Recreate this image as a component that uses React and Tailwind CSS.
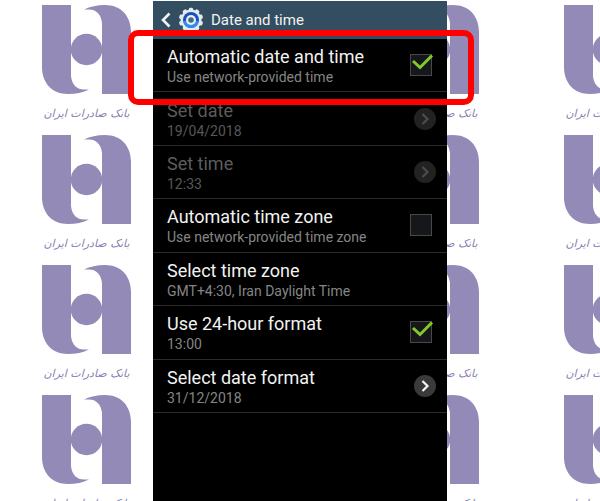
import React, { useState } from "react"
import clsx from "clsx"

function BankLogo() {
	return (
		<svg viewBox="0 0 89 89" className="block h-[89px] w-[89px]" fill="#938ab7">
			<path d="M0 0H29V71C30 80 35 84.500 42 84.500H47C41 87.500 34 89 26 89C10 89 0 78 0 62Z" />
			<path d="M89 89H60V18C59 9 54 4.500 47 4.500H42C48 1.500 55 0 63 0C79 0 89 11 89 27Z" />
			<circle cx="44.500" cy="44.500" r="15.700" />
		</svg>
	)
}

// Repeating bank logo behind the phone
function Watermark() {
	return (
		<div
			aria-hidden="true"
			className="absolute inset-0 flex flex-col overflow-hidden pt-[5px]"
		>
			{[0, 1, 2, 3].map((row) => (
				<div key={row} className="flex shrink-0">
					{[0, 1, 2, 3].map((col) => (
						<div
							key={col}
							className={clsx(
								"h-[130px] w-[174px] shrink-0 pl-[42px]",
								col === 1 && "invisible"
							)}
						>
							<div className="w-[89px]">
								<BankLogo />
								{col !== 1 && (
									<p
										dir="rtl"
										className="mt-[8px] text-center text-[11px] leading-[24px] whitespace-nowrap text-[#8a80b3] italic font-['DejaVu_Sans',sans-serif]"
									>
										بانک صادرات ایران
									</p>
								)}
							</div>
						</div>
					))}
				</div>
			))}
		</div>
	)
}

function GearIcon() {
	const teeth = [0, 36, 72, 108, 144, 180, 216, 252, 288, 324]
	return (
		<svg viewBox="0 0 26 26" className="h-[26px] w-[26px]">
			<g fill="#e4ebf0">
				<circle cx="13" cy="13" r="10.500" />
				{teeth.map((angle) => (
					<rect
						key={angle}
						x="10.800"
						y="0.800"
						width="4.400"
						height="5"
						rx="1.500"
						transform={`rotate(${angle} 13 13)`}
					/>
				))}
			</g>
			<circle cx="13" cy="13" r="8" fill="#1a50bd" />
			<path d="M5.500 14a7.500 7 0 0 0 15 0z" fill="#2f8fee" />
			<circle cx="13" cy="13" r="5" fill="#e9f0f6" />
			<circle cx="13" cy="13" r="2.800" fill="#44688c" />
		</svg>
	)
}

function RowText({ title, summary, disabled }) {
	return (
		<span className="flex flex-col pt-[3px] text-left">
			<span
				className={clsx(
					"text-[18px] leading-[22px]",
					disabled ? "text-[#5c5c5c]" : "text-[#f2f2f2]"
				)}
			>
				{title}
			</span>
			<span
				className={clsx(
					"text-[14px] leading-[19px]",
					disabled ? "text-[#575757]" : "text-[#858585]"
				)}
			>
				{summary}
			</span>
		</span>
	)
}

function CheckRow({ title, summary, defaultChecked = false }) {
	const [checked, setChecked] = useState(defaultChecked)

	return (
		<label className="flex h-full items-center justify-between pr-[15px] pl-[14px]">
			<RowText title={title} summary={summary} />
			<span className="relative">
				<input
					type="checkbox"
					checked={checked}
					onChange={() => setChecked(!checked)}
					className="block h-[22px] w-[22px] appearance-none border border-[#484848] bg-[#15171a]"
				/>
				{checked && (
					<svg
						viewBox="0 0 24 24"
						className="pointer-events-none absolute top-0 left-0 h-6 w-6 overflow-visible"
						fill="none"
						stroke="#82c92b"
						strokeWidth="3"
					>
						<path d="M3 7L10 13.500L22 1.500" />
					</svg>
				)}
			</span>
		</label>
	)
}

function ActionRow({ title, summary, disabled, arrow }) {
	return (
		<button
			type="button"
			disabled={disabled}
			className="flex h-full w-full items-center justify-between pr-[11px] pl-[14px]"
		>
			<RowText title={title} summary={summary} disabled={disabled} />
			{arrow && (
				<svg viewBox="0 0 22 22" className="h-[22px] w-[22px]" fill="none">
					<circle cx="11" cy="11" r="11" fill={disabled ? "#222222" : "#3a3a3a"} />
					<path
						d="M8.500 6L13.500 11L8.500 16"
						stroke={disabled ? "#4c4c4c" : "#f4f4f4"}
						strokeWidth="2.200"
					/>
				</svg>
			)}
		</button>
	)
}

const settings = [
	{
		type: "check",
		title: "Automatic date and time",
		summary: "Use network-provided time",
		defaultChecked: true,
	},
	{ title: "Set date", summary: "19/04/2018", disabled: true, arrow: true },
	{ title: "Set time", summary: "12:33", disabled: true, arrow: true },
	{
		type: "check",
		title: "Automatic time zone",
		summary: "Use network-provided time zone",
	},
	{ title: "Select time zone", summary: "GMT+4:30, Iran Daylight Time" },
	{
		type: "check",
		title: "Use 24-hour format",
		summary: "13:00",
		defaultChecked: true,
	},
	{ title: "Select date format", summary: "31/12/2018", arrow: true },
]

function App() {
	return (
		<main className="relative flex min-h-screen justify-center overflow-hidden bg-white pt-px font-[Roboto,sans-serif]">
			<Watermark />

			<section className="relative w-[49%] min-w-[290px] bg-black">
				<header className="flex h-[38px] items-center bg-[#324e60] pl-[8px] text-[#f2f2f2]">
					<button type="button" aria-label="Back" className="mr-[7px]">
						<svg
							viewBox="0 0 10 16"
							className="h-4 w-[10px]"
							fill="none"
							stroke="currentColor"
							strokeWidth="2.600"
						>
							<path d="M8.500 1.500L2 8L8.500 14.500" />
						</svg>
					</button>
					<GearIcon />
					<h1 className="ml-[7px] text-[15px] leading-[20px]">Date and time</h1>
				</header>

				<ul className="grid min-h-[374px] auto-rows-fr">
					{settings.map(({ type, ...item }) => (
						<li key={item.title} className="border-b border-[#2b2b2b]">
							{type === "check" ? <CheckRow {...item} /> : <ActionRow {...item} />}
						</li>
					))}
				</ul>

				{/* Highlight around the first setting */}
				<div className="pointer-events-none absolute top-[29px] -right-[27px] -left-[25px] h-[75px] rounded-[10px] border-[6px] border-[#ff0000]" />
			</section>
		</main>
	)
}

export default App
